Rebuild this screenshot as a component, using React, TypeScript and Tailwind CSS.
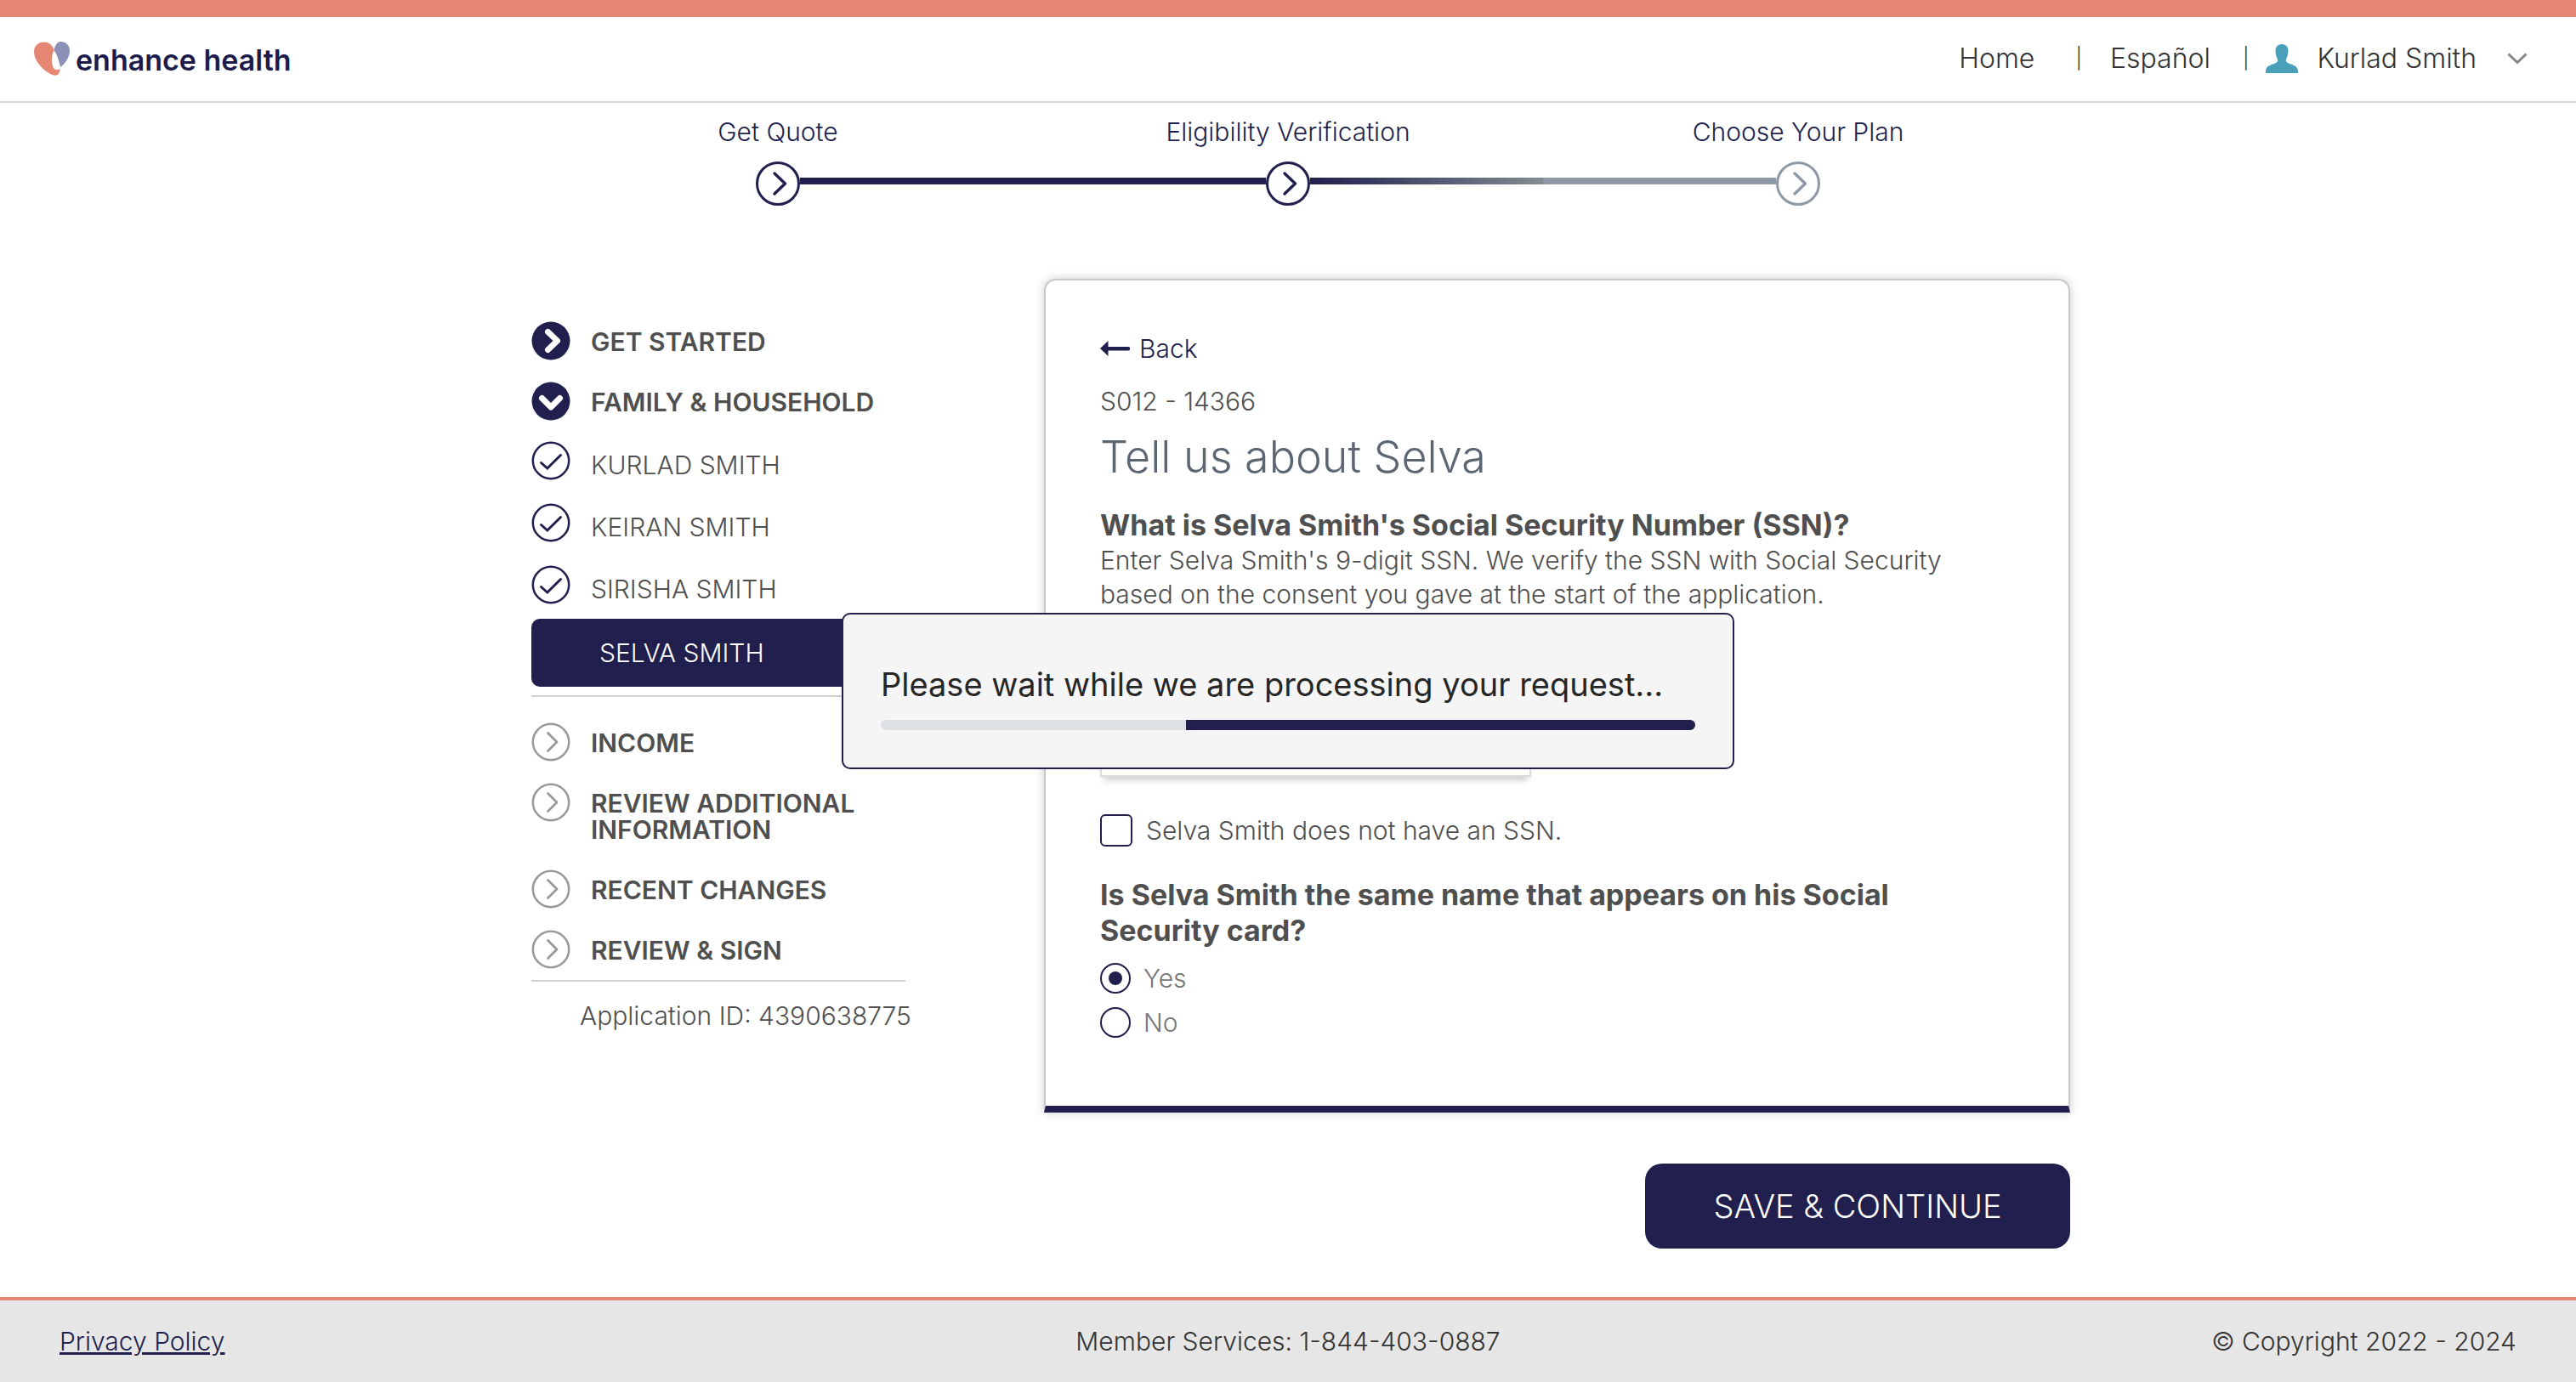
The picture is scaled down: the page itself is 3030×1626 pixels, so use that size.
import React from "react";

type StepState = "done" | "current" | "todo";

const steps: { label: string; state: StepState }[] = [
  { label: "Get Quote", state: "done" },
  { label: "Eligibility Verification", state: "current" },
  { label: "Choose Your Plan", state: "todo" },
];

const lineBefore = ["bg-transparent", "bg-[#211f4d]", "bg-[#8e99a6]"];
const lineAfter = ["bg-[#211f4d]", "bg-linear-to-r from-[#211f4d] to-[#838c92]", "bg-transparent"];

const members = ["KURLAD SMITH", "KEIRAN SMITH", "SIRISHA SMITH"];
const upcoming = ["INCOME", "REVIEW ADDITIONAL INFORMATION", "RECENT CHANGES", "REVIEW & SIGN"];

function StepCircle({ todo }: { todo: boolean }) {
  return (
    <svg
      viewBox="0 0 52 52"
      className={todo ? "size-13 shrink-0 text-[#8e99a6]" : "size-13 shrink-0 text-[#211f4d]"}
      fill="none"
      stroke="currentColor"
      strokeWidth="3"
      aria-hidden="true"
    >
      <circle cx="26" cy="26" r="24.5" />
      <path d="M22 14l12.5 12L22 38" strokeWidth="3.4" strokeLinecap="round" strokeLinejoin="round" />
    </svg>
  );
}

function NavIcon({ kind }: { kind: "right" | "down" | "check" | "todo" }) {
  const solid = kind === "right" || kind === "down";
  return (
    <svg viewBox="0 0 46 46" className="size-[46px] shrink-0" fill="none" aria-hidden="true">
      {solid ? (
        <circle cx="23" cy="23" r="22.5" fill="#211f4d" />
      ) : (
        <circle cx="23" cy="23" r="21.2" stroke={kind === "check" ? "#211f4d" : "#989898"} strokeWidth="2.5" />
      )}
      {kind === "right" && (
        <path d="M19.5 12.5L30.5 23L19.5 33.5" stroke="#fff" strokeWidth="7" strokeLinecap="round" strokeLinejoin="round" />
      )}
      {kind === "down" && (
        <path d="M12.5 19.5L23 30L33.5 19.5" stroke="#fff" strokeWidth="7" strokeLinecap="round" strokeLinejoin="round" />
      )}
      {kind === "check" && (
        <path d="M11.5 25.5L18.8 32L34.5 16.5" stroke="#211f4d" strokeWidth="3" strokeLinecap="round" />
      )}
      {kind === "todo" && (
        <path d="M19.5 12.5L30 23L19.5 33.5" stroke="#989898" strokeWidth="2.8" strokeLinecap="round" strokeLinejoin="round" />
      )}
    </svg>
  );
}

function Logo() {
  return (
    <a href="#home" className="flex items-center gap-[7px]">
      <svg viewBox="0 0 42 40" className="h-10 w-[42px]" aria-hidden="true">
        <path
          d="M12 0.5C5 0.5 0 5 0 12C0 23 13 37 24 39.7C28 40.3 30.5 37 30.5 31.5C29 34 24.5 34 22.5 30C19.5 23 21 15 23.6 10C21 3 17 0.5 12 0.5Z"
          fill="#e58672"
        />
        <path d="M31.5 0C27 0 24.5 5 23.6 10C26 14 28 18 29 22C30 26 30.5 28 31.5 30C37 25 42 18 42 11C42 4 37.5 0 31.5 0Z" fill="#8a90b6" />
      </svg>
      <span className="pt-1 text-[34px] leading-10 font-semibold text-[#1d1b4c]">enhance health</span>
    </a>
  );
}

function Header() {
  return (
    <header className="flex h-[121px] items-center justify-between border-t-20 border-b-2 border-t-[#e58672] border-b-[#d8d8d8] pr-[57px] pb-0.5 pl-10">
      <Logo />
      <nav className="flex items-center text-[32px] leading-10 font-light text-[#333]">
        <a href="#home">Home</a>
        <span className="mr-[33px] ml-12 text-[24px]">|</span>
        <a href="#es">Español</a>
        <span className="mr-5 ml-[38px] text-[24px]">|</span>
        <button type="button" className="flex items-center">
          <svg viewBox="0 0 38 34" className="mr-[22px] h-[34px] w-[38px]" fill="#4aa0ba" aria-hidden="true">
            <path d="M19 0C14 0 11.3 3.5 11.6 8.5C11.8 12.5 12.6 15 13.8 17.3C14.6 19.5 14 21.3 11 22.5C5 24.8 0 26 0 32V34H38V32C38 26 33 24.8 27 22.5C24 21.3 23.4 19.5 24.2 17.3C25.4 15 26.2 12.5 26.4 8.5C26.7 3.5 24 0 19 0Z" />
          </svg>
          Kurlad Smith
          <svg viewBox="0 0 24 14" className="ml-9 h-[14px] w-6" fill="none" stroke="#858585" strokeWidth="3" aria-hidden="true">
            <path d="M1.5 1.5L12 11.5L22.5 1.5" />
          </svg>
        </button>
      </nav>
    </header>
  );
}

function Stepper() {
  return (
    <ol className="mx-auto grid w-full max-w-[1800px] grid-cols-3 pt-[14px]">
      {steps.map((step, i) => (
        <li key={step.label} className="flex flex-col items-center gap-[15px]">
          <span className="text-[30px] leading-10 font-light text-[#211f4d]">{step.label}</span>
          <div className="flex w-full items-center">
            <span className={`mb-[6px] h-2 flex-1 ${lineBefore[i]}`} />
            <StepCircle todo={step.state === "todo"} />
            <span className={`mb-[6px] h-2 flex-1 ${lineAfter[i]}`} />
          </div>
        </li>
      ))}
    </ol>
  );
}

function SectionLink({ kind, label }: { kind: "right" | "down" | "todo"; label: string }) {
  return (
    <li>
      <a href="#section" className="flex items-start gap-6">
        <NavIcon kind={kind} />
        <span className="pt-[9px] pb-[19px] text-[30px] leading-[31px] font-semibold text-[#4f4f4f]">{label}</span>
      </a>
    </li>
  );
}

function Sidebar() {
  return (
    <nav className="w-[468px] shrink-0 pt-[50px]">
      <div className="w-[440px]">
        <ul className="flex flex-col gap-3">
          <SectionLink kind="right" label="GET STARTED" />
          <SectionLink kind="down" label="FAMILY & HOUSEHOLD" />
        </ul>
        <ul className="mt-[11px] flex flex-col gap-[11px]">
          {members.map((name) => (
            <li key={name}>
              <a href="#member" className="flex items-start gap-6">
                <NavIcon kind="check" />
                <span className="pt-[13px] pb-[18px] text-[30px] leading-[31px] font-light text-[#4f4f4f]">{name}</span>
              </a>
            </li>
          ))}
        </ul>
        <a
          href="#member"
          aria-current="page"
          className="mt-px flex h-20 items-center rounded-[10px] bg-[#211f4d] pl-20 text-[30px] leading-[31px] font-light text-white"
        >
          SELVA SMITH
        </a>
        <ul className="mt-[10px] flex flex-col gap-3 border-y-2 border-[#d0d0d0] pt-[30px]">
          {upcoming.map((label) => (
            <SectionLink key={label} kind="todo" label={label} />
          ))}
        </ul>
      </div>
      <p className="mt-5 pl-[57px] text-[30px] leading-10 font-light text-[#4f4f4f]">Application ID: 4390638775</p>
    </nav>
  );
}

const radioClass =
  "grid size-9 shrink-0 appearance-none place-items-center rounded-full border-2 border-[#211f4d] bg-white checked:before:size-4 checked:before:rounded-full checked:before:bg-[#211f4d]";

function SsnCard() {
  return (
    <form
      id="ssn-form"
      className="rounded-t-[14px] border-2 border-b-8 border-[#c8c8c8] border-b-[#211f4d] bg-white px-16 pt-15 pb-20 text-[30px] leading-10 text-[#4f4f4f] shadow-[0_0_12px_rgba(0,0,0,0.2)]"
    >
      <a href="#back" className="flex w-fit items-center gap-[11px] font-light text-[#211f4d]">
        <svg viewBox="0 0 35 18" className="h-[18px] w-[35px]" fill="#211f4d" aria-hidden="true">
          <path d="M0 9L9.500 0V7H33a2 2 0 0 1 0 4.500H9.500V18Z" />
        </svg>
        Back
      </a>
      <p className="mt-[22px] font-light">S012 - 14366</p>
      <h1 className="mt-4 text-[52px] leading-[60px] font-light text-[#5c6672]">Tell us about Selva</h1>
      <h2 className="mt-[29px] text-[34px] leading-[42px] font-bold">What is Selva Smith's Social Security Number (SSN)?</h2>
      <p className="font-light">
        Enter Selva Smith's 9-digit SSN. We verify the SSN with Social Security
        <br />
        based on the consent you gave at the start of the application.
      </p>
      <input
        type="text"
        aria-label="Social Security Number"
        className="mt-[115px] block h-20 w-[507px] border-2 border-[#d8dcdb] shadow-[0_8px_8px_-4px_rgba(0,0,0,0.2)]"
      />
      <label className="mt-11 flex h-[38px] items-center gap-4 font-light">
        <input type="checkbox" className="size-[38px] shrink-0 appearance-none rounded-md border-2 border-[#211f4d]" />
        Selva Smith does not have an SSN.
      </label>
      <fieldset className="mt-9">
        <legend className="text-[34px] leading-[42px] font-bold">
          Is Selva Smith the same name that appears on his Social
          <br />
          Security card?
        </legend>
        <div className="flex flex-col gap-4 pt-[17px] font-light text-[#767676]">
          <label className="flex h-9 items-center gap-[15px]">
            <input type="radio" name="same-name" defaultChecked className={radioClass} />
            Yes
          </label>
          <label className="flex h-9 items-center gap-[15px]">
            <input type="radio" name="same-name" className={radioClass} />
            No
          </label>
        </div>
      </fieldset>
    </form>
  );
}

function ProcessingDialog() {
  return (
    <div className="fixed inset-0 flex items-center justify-center">
      <div role="dialog" aria-label="Processing" className="w-[1050px] rounded-[10px] border-2 border-[#211f4d] bg-[#f5f5f5] px-11 pt-[58px] pb-11">
        <p className="text-[38px] leading-12 whitespace-nowrap text-[#262626]">Please wait while we are processing your request...</p>
        <div className="mt-[18px] flex h-3 justify-end overflow-hidden rounded-full bg-[#dde1e5]">
          <div className="w-5/8 bg-[#211f4d]" />
        </div>
      </div>
    </div>
  );
}

export default function App() {
  return (
    <div className="flex min-h-screen flex-col bg-white font-['Inter',sans-serif]">
      <Header />
      <Stepper />
      <main className="mx-auto flex w-full max-w-[1840px] flex-1 pt-[86px] pb-[57px] pl-[30px]">
        <Sidebar />
        <div className="ml-[135px] flex min-w-0 flex-1 flex-col">
          <SsnCard />
          <button
            type="submit"
            form="ssn-form"
            className="mt-15 h-25 w-[500px] self-end rounded-[20px] bg-[#211f4d] text-[38px] leading-12 font-light text-white"
          >
            SAVE &amp; CONTINUE
          </button>
        </div>
      </main>
      <footer className="grid h-25 grid-cols-3 items-center border-t-4 border-[#e58672] bg-[#e6e6e6] px-[70px] text-[30px] leading-10 font-light text-[#333]">
        <a href="#privacy" className="justify-self-start text-[#211f4d] underline">
          Privacy Policy
        </a>
        <p className="text-center">Member Services: 1-844-403-0887</p>
        <p className="text-right">© Copyright 2022 - 2024</p>
      </footer>
      <ProcessingDialog />
    </div>
  );
}
